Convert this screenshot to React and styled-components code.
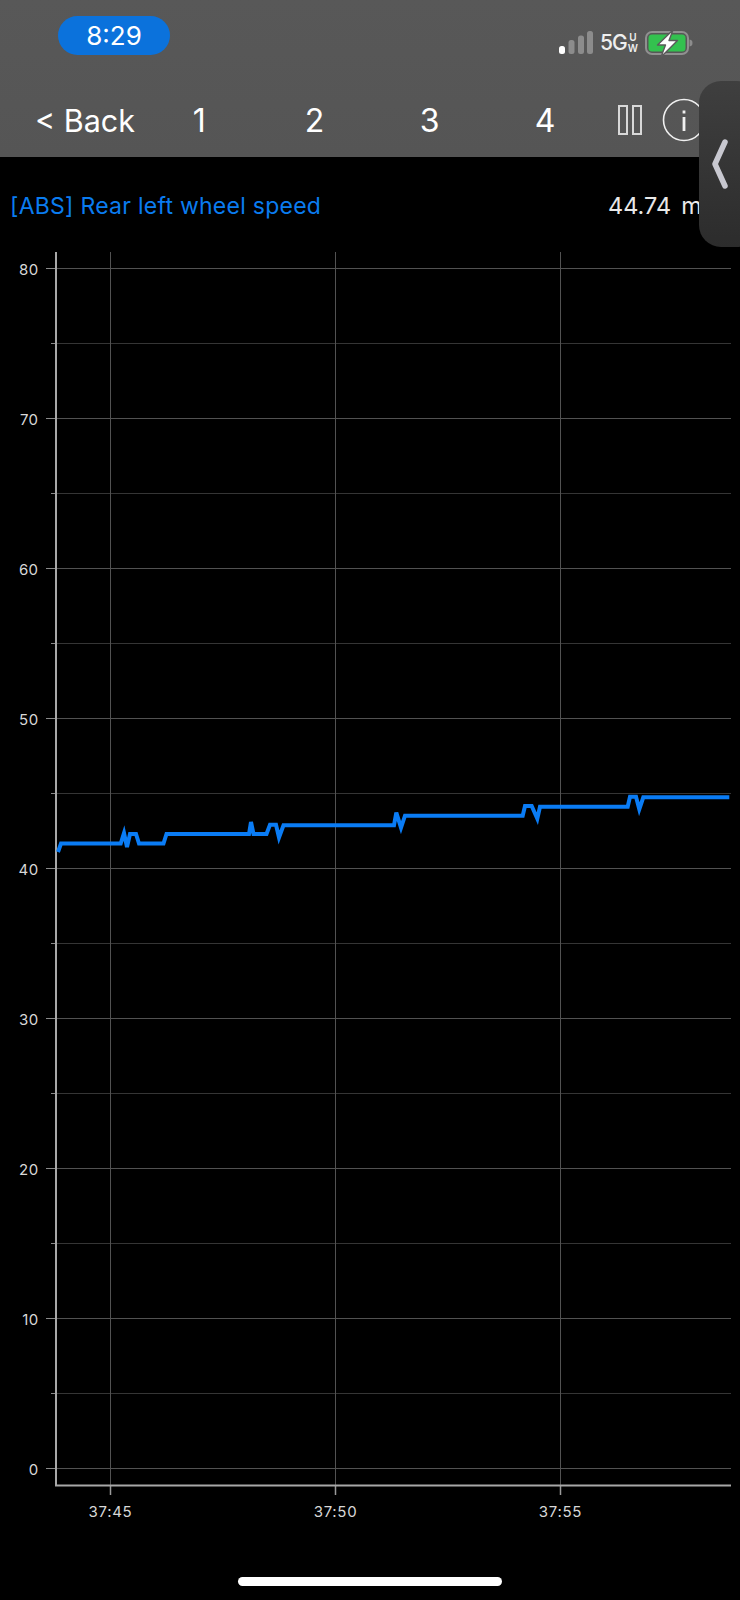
import React from 'react';
import styled, { createGlobalStyle } from 'styled-components';

const GlobalStyle = createGlobalStyle`
  html, body {
    margin: 0;
    padding: 0;
    background: #000;
  }
`;

const Page = styled.div`
  position: relative;
  width: 740px;
  height: 1600px;
  overflow: hidden;
  background: #000;
  font-family: Inter, "Liberation Sans", sans-serif;
`;

const Header = styled.header`
  height: 157px;
  background: linear-gradient(180deg, #585858 0%, #555 100%);
  box-sizing: border-box;
  padding-top: 16px;
`;

const StatusBar = styled.div`
  display: flex;
  justify-content: space-between;
  align-items: flex-start;
  padding: 0 47px 0 58px;
  height: 74px;
`;

const TimePill = styled.div`
  width: 112px;
  height: 39px;
  border-radius: 20px;
  background: #0b72dc;
  color: #fff;
  font-size: 26px;
  font-weight: 400;
  line-height: 39px;
  text-align: center;
`;

const StatusIcons = styled.div`
  display: flex;
  align-items: center;
  gap: 7px;
  height: 24px;
  margin-top: 15px;
`;

const Network = styled.div`
  display: flex;
  align-items: center;
  color: #eee;
`;

const NetworkLabel = styled.span`
  font-size: 21px;
  font-weight: 500;
  line-height: 24px;
  letter-spacing: -1px;
`;

const NetworkBand = styled.span`
  display: flex;
  flex-direction: column;
  font-size: 10px;
  font-weight: 600;
  line-height: 11px;
  text-align: center;
  margin-left: 1px;
`;

const NavBar = styled.nav`
  display: flex;
  align-items: center;
  height: 60px;
  padding-left: 35px;
  color: #fff;
`;

const BackButton = styled.div`
  width: 106.5px;
  font-size: 30.5px;
  font-weight: 400;
  white-space: nowrap;
`;

const PageNumber = styled.div`
  width: 115.3px;
  font-size: 32px;
  text-align: center;
`;

const NavIcons = styled.div`
  display: flex;
  align-items: center;
  gap: 20px;
  margin-left: 15px;
`;

const ValueRow = styled.div`
  display: flex;
  justify-content: space-between;
  align-items: center;
  height: 93px;
  padding: 4px 0 0 10px;
  box-sizing: border-box;
  font-size: 23px;
  white-space: nowrap;
  overflow: hidden;
`;

const SignalName = styled.div`
  color: #0a7cf0;
  letter-spacing: 0.26px;
`;

const SignalValue = styled.div`
  color: #e8e8e8;
  width: 132px;
  font-size: 23.5px;
  word-spacing: -1.5px;
  white-space: pre;
`;

const SidePanel = styled.div`
  position: absolute;
  top: 81px;
  left: 699px;
  width: 60px;
  height: 166px;
  border-radius: 22px;
  background: linear-gradient(180deg, #3f3f3f 0%, #2c2c2c 100%);
  display: flex;
  align-items: center;
  padding-left: 12px;
  box-sizing: border-box;
`;

const Chart = styled.svg`
  display: block;
  width: 740px;
  height: 1280px;
`;

const HomeBar = styled.div`
  width: 264px;
  height: 9px;
  margin: 47px auto 0;
  border-radius: 5px;
  background: #fff;
`;

const AXIS_LEFT = 56;
const AXIS_BOTTOM = 1485.5;
const PLOT_RIGHT = 731;
const MAJOR_Y = [80, 70, 60, 50, 40, 30, 20, 10, 0];
const MINOR_Y = [75, 65, 55, 45, 35, 25, 15, 5];
const TIME_TICKS = [
  { x: 110.5, label: '37:45' },
  { x: 335.5, label: '37:50' },
  { x: 560.5, label: '37:55' },
];

const yFor = (v) => 1468.5 - v * 15;

const SPEED_LINE = [
  [58, 852], [61, 843.5], [120.7, 843.5], [124, 833], [127, 847], [130, 834], [136, 834],
  [139, 843.5], [163.5, 843.5], [166.5, 834], [249, 834], [251, 822], [253.5, 834],
  [266.5, 834], [270, 824.7], [276, 824.7], [279, 837.5], [283.5, 825.3], [394, 825.3],
  [396.3, 812.7], [401, 827.7], [405, 815.7], [522.7, 815.7], [525, 806], [531.7, 806],
  [537.3, 818.7], [540, 806.7], [627.7, 806.7], [630, 796.7], [636, 796.7], [639.3, 809.3],
  [643.3, 797.3], [729.3, 797.3],
];

function SignalBars() {
  return (
    <svg width="34" height="24" viewBox="0 0 34 24">
      <rect x="0" y="15" width="6" height="8" rx="2.5" fill="#fff" />
      <rect x="9.5" y="9" width="6" height="14" rx="2.5" fill="#8c8c8c" />
      <rect x="19" y="4.5" width="6" height="18.5" rx="2.5" fill="#8c8c8c" />
      <rect x="28" y="0" width="6" height="23" rx="2.5" fill="#8c8c8c" />
    </svg>
  );
}

function Battery() {
  return (
    <svg width="48" height="26" viewBox="0 -1 48 26" style={{ overflow: 'visible' }}>
      <rect x="1" y="1" width="42" height="22" rx="6" fill="none" stroke="#909090" strokeWidth="2" />
      <rect x="3.5" y="3.5" width="37" height="17" rx="3.5" fill="#33c14f" />
      <path d="M44.5 8.5 C47 9 47.5 10 47.5 12 C47.5 14 47 15 44.5 15.5 Z" fill="#8c8c8c" />
      <path d="M28 -1 L12.5 14 H20.5 L16 26 L32.5 9.5 H24 Z" fill="#fff" stroke="#5a5a5a" strokeWidth="1.4" strokeLinejoin="round" />
    </svg>
  );
}

function PauseIcon() {
  return (
    <svg width="24" height="30" viewBox="0 0 24 30">
      <rect x="1" y="1" width="8" height="28" fill="none" stroke="#d8d8d8" strokeWidth="2" />
      <rect x="15" y="1" width="8" height="28" fill="none" stroke="#d8d8d8" strokeWidth="2" />
    </svg>
  );
}

function InfoIcon() {
  return (
    <svg width="44" height="44" viewBox="0 0 44 44">
      <circle cx="22" cy="22" r="20.5" fill="none" stroke="#f0f0f0" strokeWidth="1.6" />
      <rect x="20.6" y="19" width="2.8" height="14" fill="#f0f0f0" />
      <rect x="20.6" y="12.5" width="2.8" height="3" fill="#f0f0f0" />
    </svg>
  );
}

function Chevron() {
  return (
    <svg width="18" height="50" viewBox="0 0 18 50">
      <path d="M14 3 L4 25 L14 47" fill="none" stroke="#c8c8d0" strokeWidth="5.5" strokeLinecap="round" strokeLinejoin="round" />
    </svg>
  );
}

function SpeedChart() {
  const points = SPEED_LINE.map((p) => p.join(',')).join(' ');
  return (
    <Chart viewBox="0 250 740 1280">
      {MINOR_Y.map((v) => (
        <g key={v} stroke="#353535" strokeWidth="1">
          <line x1={AXIS_LEFT} x2={PLOT_RIGHT} y1={yFor(v)} y2={yFor(v)} />
          <line x1="51" x2={AXIS_LEFT} y1={yFor(v)} y2={yFor(v)} stroke="#8a8a8a" />
        </g>
      ))}
      {MAJOR_Y.map((v) => (
        <g key={v}>
          <line x1={AXIS_LEFT} x2={PLOT_RIGHT} y1={yFor(v)} y2={yFor(v)} stroke="#525252" />
          <line x1="46" x2={AXIS_LEFT} y1={yFor(v)} y2={yFor(v)} stroke="#8a8a8a" />
          <text x="38.5" y={yFor(v) + 6} textAnchor="end" fontSize="15" fill="#d8d8d8" letterSpacing="0.4">{v}</text>
        </g>
      ))}
      {TIME_TICKS.map((t) => (
        <g key={t.label}>
          <line x1={t.x} x2={t.x} y1="252" y2={AXIS_BOTTOM} stroke="#525252" />
          <line x1={t.x} x2={t.x} y1={AXIS_BOTTOM} y2="1495" stroke="#9a9a9a" strokeWidth="1.5" />
          <text x={t.x} y="1517" textAnchor="middle" fontSize="15" fill="#d8d8d8" letterSpacing="0.7">{t.label}</text>
        </g>
      ))}
      <path d={`M${AXIS_LEFT} 252 V${AXIS_BOTTOM} H${PLOT_RIGHT}`} fill="none" stroke="#a8a8a8" strokeWidth="2" />
      <polyline points={points} fill="none" stroke="#0a7cf5" strokeWidth="4" strokeLinejoin="miter" />
    </Chart>
  );
}

export default function App() {
  return (
    <>
      <GlobalStyle />
      <Page>
        <Header>
          <StatusBar>
            <TimePill>8:29</TimePill>
            <StatusIcons>
              <SignalBars />
              <Network>
                <NetworkLabel>5G</NetworkLabel>
                <NetworkBand>
                  <span>U</span>
                  <span>W</span>
                </NetworkBand>
              </Network>
              <Battery />
            </StatusIcons>
          </StatusBar>
          <NavBar>
            <BackButton>&lt; Back</BackButton>
            {[1, 2, 3, 4].map((n) => (
              <PageNumber key={n}>{n}</PageNumber>
            ))}
            <NavIcons>
              <PauseIcon />
              <InfoIcon />
            </NavIcons>
          </NavBar>
        </Header>
        <ValueRow>
          <SignalName>[ABS] Rear left wheel speed</SignalName>
          <SignalValue>44.74  mph</SignalValue>
        </ValueRow>
        <SpeedChart />
        <HomeBar />
        <SidePanel>
          <Chevron />
        </SidePanel>
      </Page>
    </>
  );
}
